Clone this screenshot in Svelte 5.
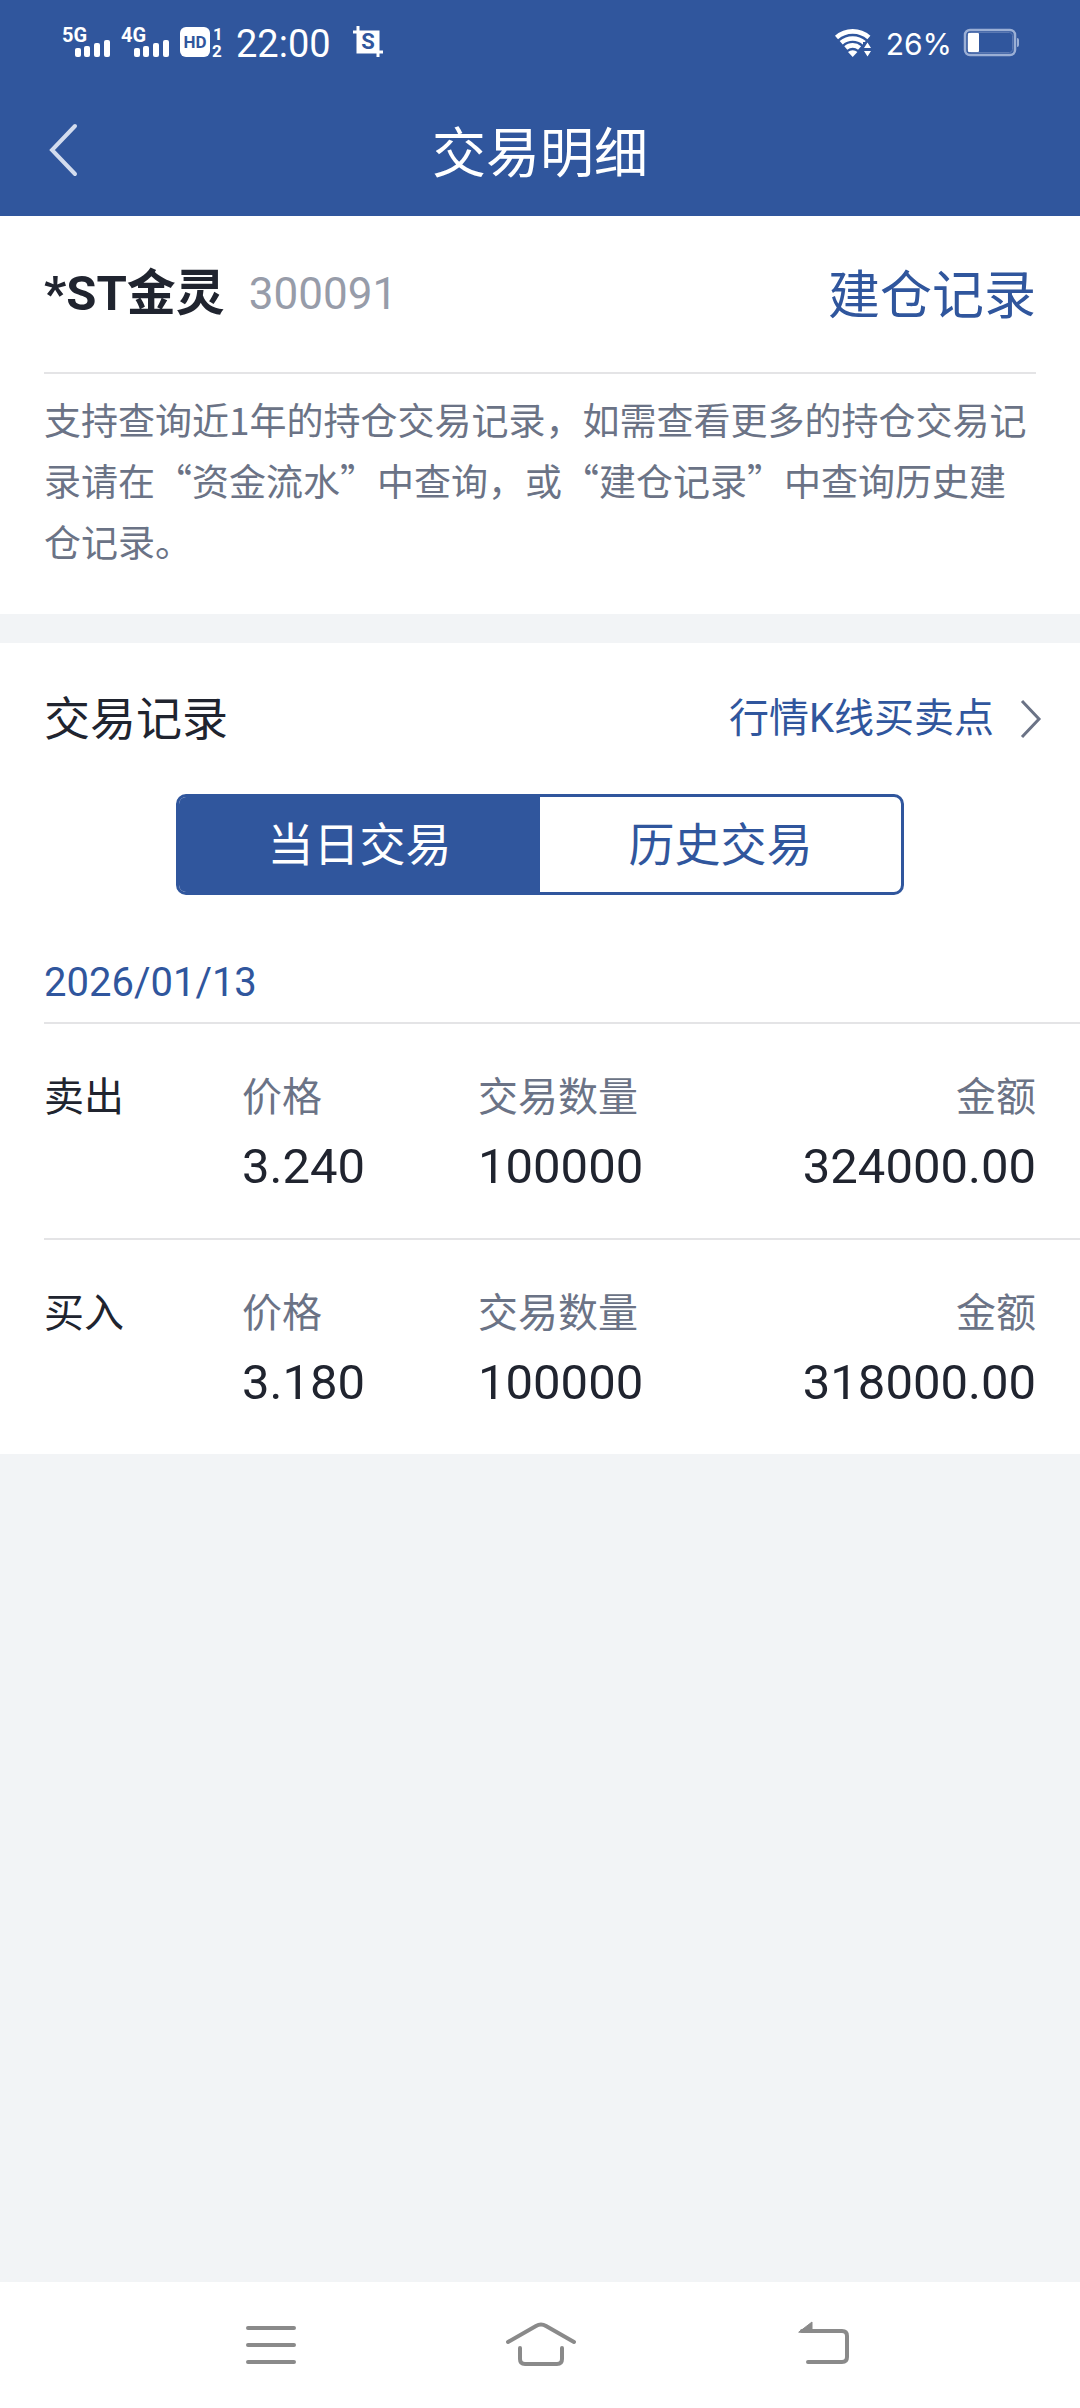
<script>
  let stock = { name: "*ST金灵", code: "300091" };

  let tabs = [
    { id: "today", label: "当日交易" },
    { id: "history", label: "历史交易" },
  ];

  let date = "2026/01/13";

  let trades = [
    { id: 1, side: "卖出", price: "3.240", amount: "100000", total: "324000.00" },
    { id: 2, side: "买入", price: "3.180", amount: "100000", total: "318000.00" },
  ];

  let signals = ["5G", "4G"];

  let selected = "today";
</script>

<div class="screen">
  <div class="status">
    {#each signals as signal (signal)}
      <svg class="signal" width="48" height="40" viewBox="0 0 48 40">
        <text x="0" y="20">{signal}</text>
        <rect x="13" y="26" width="6" height="9" rx="2" />
        <rect x="22" y="24" width="6" height="11" rx="2" />
        <rect x="32" y="21" width="6" height="14" rx="2" />
        <rect x="42" y="18" width="6" height="17" rx="2" />
      </svg>
    {/each}
    <svg class="hd" width="44" height="40" viewBox="0 0 44 40">
      <rect x="0" y="5" width="30" height="30" rx="6" />
      <text class="hd-label" x="15" y="26" text-anchor="middle">HD</text>
      <text x="33" y="18">1</text>
      <text x="32" y="35">2</text>
    </svg>
    <span class="time">22:00</span>
    <svg class="shot" width="30" height="32" viewBox="0 0 30 32">
      <path d="M5 0v26h25M0 6h25v25" fill="none" stroke="#fff" stroke-width="3" />
      <rect x="4" y="5" width="22" height="22" />
      <text x="15" y="23" text-anchor="middle">S</text>
    </svg>

    <svg class="wifi" width="38" height="32" viewBox="0 0 38 32">
      <g fill="none" stroke="#fff" stroke-width="4.6">
        <path d="M3.5 11.5a24.5 24.5 0 0 1 32.4 0" />
        <path d="M8.2 16.8a17.5 17.5 0 0 1 23 0" />
        <path d="M12.8 22a10.5 10.5 0 0 1 13.8 0" />
      </g>
      <path d="M15 26a7 7 0 0 1 9.4 0l-4.7 5z" fill="#fff" />
      <path d="M30 16h8v16h-8z" fill="#30569d" />
      <path d="M34.500 16.500l3.500 5.500h-7zM34.500 30.500l3.500-5.500h-7z" fill="#fff" />
    </svg>
    <span class="percent">26%</span>
    <svg width="56" height="32" viewBox="0 0 56 32">
      <rect x="1" y="4" width="50" height="25" rx="5" fill="none" stroke="#9bafd5" stroke-width="2.500" />
      <rect x="3.500" y="6.500" width="45" height="20" rx="3" fill="none" stroke="#5b79b3" />
      <rect x="4" y="7" width="11" height="19" rx="1" fill="#fff" />
      <path d="M53 12q2 0 2 2v5q0 2-2 2z" fill="#9bafd5" />
    </svg>
  </div>

  <header>
    <button class="back" aria-label="返回">
      <svg width="32" height="56" viewBox="0 0 32 56">
        <path d="M27 4L4 28l23 24" />
      </svg>
    </button>
    <h1>交易明细</h1>
  </header>

  <section class="summary">
    <div class="stock">
      <h2>{stock.name}</h2>
      <span class="code">{stock.code}</span>
      <a class="open-record" href="#open">建仓记录</a>
    </div>
    <p>
      支持查询近1年的持仓交易记录，如需查看更多的持仓交易记录请在“资金流水”中查询，或“建仓记录”中查询历史建仓记录。
    </p>
  </section>

  <section class="records">
    <div class="records-head">
      <h3>交易记录</h3>
      <a href="#kline">
        行情K线买卖点
        <svg width="24" height="40" viewBox="0 0 24 40">
          <path d="M4 2l17 18L4 38" />
        </svg>
      </a>
    </div>

    <div class="tabs" role="tablist">
      {#each tabs as tab (tab.id)}
        <button
          role="tab"
          aria-selected={selected === tab.id}
          on:click={() => (selected = tab.id)}
        >
          {tab.label}
        </button>
      {/each}
    </div>

    <div class="list">
      <div class="date">{date}</div>
      {#each trades as trade (trade.id)}
        <div class="trade">
          <span class="side">{trade.side}</span>
          <dl>
            <dt>价格</dt>
            <dd>{trade.price}</dd>
          </dl>
          <dl>
            <dt>交易数量</dt>
            <dd>{trade.amount}</dd>
          </dl>
          <dl class="total">
            <dt>金额</dt>
            <dd>{trade.total}</dd>
          </dl>
        </div>
      {/each}
    </div>
  </section>

  <nav>
    <button aria-label="菜单">
      <svg width="50" height="48" viewBox="0 0 50 48">
        <path d="M2 7h46M2 24h46M2 41h46" />
      </svg>
    </button>
    <button aria-label="主页">
      <svg width="70" height="48" viewBox="0 0 70 48">
        <path d="M2 21L30 5q5-3 10 0l28 16" />
        <path d="M14 27v11q0 5 5 5h32q5 0 5-5V27" />
      </svg>
    </button>
    <button aria-label="返回上一级">
      <svg width="64" height="48" viewBox="0 0 64 48">
        <path d="M17 10h40q5 0 5 5v21q0 5-5 5H23" />
        <path class="tip" d="M14 11L27 1v10z" />
      </svg>
    </button>
  </nav>
</div>

<style>
  :global(body) {
    margin: 0;
    background-color: #f2f4f6;
  }

  .screen {
    --blue: #30569d;
    --dark: #20242f;
    --grey: #6b7386;
    --line: #e4e4e6;

    display: flex;
    flex-direction: column;
    min-height: 100vh;

    font-family: Roboto, "Noto Sans CJK SC", sans-serif;
    color: var(--dark);
  }

  h1,
  h2,
  h3,
  p,
  dl,
  dd {
    margin: 0;
  }

  a {
    color: var(--blue);
    text-decoration: none;
  }

  button {
    padding: 0;
    appearance: none;
    background: none;
    border: none;
    color: inherit;
    font: inherit;
    cursor: pointer;
  }

  svg {
    display: block;
    flex: none;
    overflow: visible;
  }

  .status {
    display: flex;
    align-items: center;
    height: 84px;
    padding: 0 60px 0 62px;

    background-color: var(--blue);
    color: #fff;
    fill: #fff;
  }

  .signal {
    margin-right: 11px;
    font-size: 20px;
    font-weight: 700;
  }

  .hd {
    margin-right: 12px;
    font-size: 17px;
    font-weight: 700;
  }

  .hd-label,
  .shot text {
    fill: var(--blue);
  }

  .time {
    padding-top: 3px;
    font-size: 38px;
    line-height: 40px;
  }

  .shot {
    margin-left: 22px;
    font-size: 22px;
    font-weight: 700;
  }

  .wifi {
    margin-left: auto;
  }

  .percent {
    padding-top: 3px;
    margin: 0 12px 0 15px;
    font-family: Inter, sans-serif;
    font-size: 30px;
    line-height: 40px;
  }

  header {
    display: grid;
    grid-template-columns: 80px 1fr 80px;
    align-items: center;
    height: 132px;

    background-color: var(--blue);
    color: #fff;
  }

  .back {
    padding-left: 48px;
  }

  .back path {
    fill: none;
    stroke: #d3dcee;
    stroke-width: 4;
    stroke-linecap: round;
  }

  h1 {
    padding-top: 9px;
    font-size: 54px;
    font-weight: 400;
    line-height: 80px;
    text-align: center;
  }

  .summary {
    padding: 0 44px 42px;
    background-color: #fff;
  }

  .stock {
    display: flex;
    align-items: center;
    height: 156px;
    border-bottom: 2px solid var(--line);
  }

  h2 {
    font-size: 49px;
    font-weight: 700;
    line-height: 60px;
  }

  .code {
    margin-left: 24px;
    color: #979ca9;
    font-size: 44px;
    line-height: 60px;
  }

  .open-record {
    padding-top: 6px;
    margin-left: auto;
    font-size: 52px;
    line-height: 60px;
  }

  p {
    padding-top: 15px;
    color: var(--grey);
    font-family: "Noto Sans CJK SC", sans-serif;
    font-size: 37px;
    line-height: 61px;
  }

  .records {
    margin-top: 29px;
    background-color: #fff;
  }

  .records-head {
    display: flex;
    align-items: center;
    justify-content: space-between;
    height: 151px;
    padding: 0 38px 0 44px;
  }

  h3 {
    font-size: 46px;
    font-weight: 400;
    line-height: 60px;
  }

  .records-head a {
    display: flex;
    align-items: center;
    gap: 24px;
    font-size: 40px;
    line-height: 60px;
  }

  .records-head path {
    fill: none;
    stroke: var(--grey);
    stroke-width: 3;
  }

  .tabs {
    display: grid;
    grid-template-columns: 1fr 1fr;
    height: 95px;
    margin: 0 176px;

    border: 3px solid var(--blue);
    border-radius: 10px;
    overflow: hidden;
  }

  .tabs button {
    color: var(--blue);
    font-size: 46px;
    line-height: 60px;
  }

  .tabs [aria-selected="true"] {
    background-color: var(--blue);
    color: #fff;
  }

  .list {
    padding-left: 44px;
  }

  .date {
    padding: 58px 0 9px;
    color: var(--blue);
    font-size: 40px;
    line-height: 60px;
  }

  .trade {
    display: grid;
    grid-template-columns: 198px 236px 1fr auto;
    height: 164px;
    padding: 44px 44px 6px 0;
    border-top: 2px solid var(--line);
  }

  .side,
  dt {
    font-size: 40px;
    line-height: 60px;
  }

  dt {
    color: var(--grey);
  }

  dd {
    padding-top: 5px;
    font-size: 49px;
    line-height: 68px;
  }

  .total {
    text-align: right;
  }

  nav {
    display: flex;
    align-items: center;
    justify-content: space-between;
    height: 126px;
    margin-top: auto;
    padding: 0 231px 0 246px;
    background-color: #fff;
  }

  nav path {
    fill: none;
    stroke: #8a8a8a;
    stroke-width: 4;
    stroke-linecap: round;
  }

  nav .tip {
    fill: #8a8a8a;
    stroke-width: 1;
    stroke-linejoin: round;
  }
</style>
